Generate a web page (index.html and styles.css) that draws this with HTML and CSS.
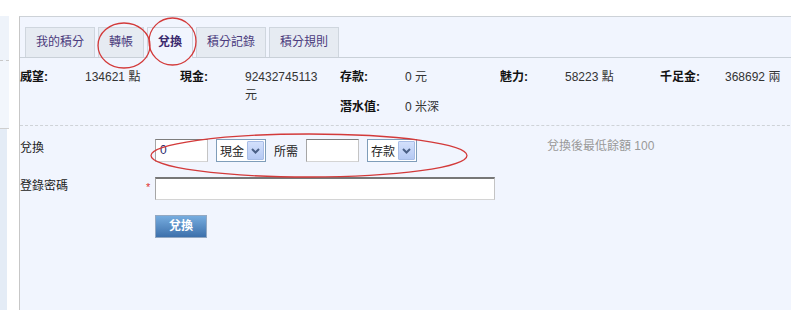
FILE: index.html
```html
<!DOCTYPE HTML>
<html lang="zh-Hant">
<head>
    <meta charset="UTF-8">
    <title>兌換積分</title>
    <link rel="stylesheet" href="styles.css">
</head>
<body>

    <div class="page">
        <!-- 左側欄 -->
        <div class="sidebar">
            <div class="side-top"></div>
            <div class="side-mid"></div>
            <div class="side-rest"></div>
        </div>

        <div class="main">
            <!-- 分頁 -->
            <ul class="tabs">
                <li>我的積分</li>
                <li>轉帳</li>
                <li class="active">兌換</li>
                <li>積分記錄</li>
                <li>積分規則</li>
            </ul>

            <!-- 積分一覽 -->
            <div class="stats">
                <div class="stat"><b>威望:</b><span>134621 點</span></div>
                <div class="stat"><b>現金:</b><span>92432745113 元</span></div>
                <div class="stat"><b>存款:</b><span>0 元</span></div>
                <div class="stat dive"><b>潛水值:</b><span>0 米深</span></div>
                <div class="stat"><b>魅力:</b><span>58223 點</span></div>
                <div class="stat"><b>千足金:</b><span>368692 兩</span></div>
            </div>

            <!-- 兌換表單 -->
            <div class="form">
                <div class="label">兌換</div>
                <div class="star"></div>
                <div class="field">
                    <div class="input small">0</div>
                    <div class="select">
                        <span>現金</span>
                        <span class="arrow"><svg width="9" height="6" viewBox="0 0 9 6"><path d="M1 1 L4.5 4.5 L8 1" fill="none" stroke="#4a5f86" stroke-width="2"/></svg></span>
                    </div>
                    <span class="text">所需</span>
                    <div class="input small"></div>
                    <div class="select">
                        <span>存款</span>
                        <span class="arrow"><svg width="9" height="6" viewBox="0 0 9 6"><path d="M1 1 L4.5 4.5 L8 1" fill="none" stroke="#4a5f86" stroke-width="2"/></svg></span>
                    </div>
                </div>
                <div class="hint">兌換後最低餘額 100</div>

                <div class="label">登錄密碼</div>
                <div class="star">*</div>
                <div class="field">
                    <div class="input long"></div>
                </div>
                <div class="hint"></div>

                <div class="label"></div>
                <div class="star"></div>
                <div class="field">
                    <div class="button">兌換</div>
                </div>
                <div class="hint"></div>
            </div>
        </div>
    </div>

    <!-- 紅色標註圈 -->
    <svg class="marks" width="791" height="310">
        <ellipse cx="124" cy="45.5" rx="26" ry="22.5" />
        <ellipse cx="172.5" cy="41.5" rx="23.5" ry="23.5" />
        <ellipse cx="309" cy="155.5" rx="158" ry="21.5" />
    </svg>

</body>
</html>
```

FILE: styles.css
```css
body {
    margin: 0;
    background: #fff;
    font-family: "Liberation Sans", "Noto Sans CJK TC", sans-serif;
    font-size: 12px;
    color: #333;
    overflow: hidden;
    width: 791px;
    height: 310px;
    position: relative;
}
.page {
    display: flex;
    height: 310px;
}
.sidebar {
    flex: none;
    width: 9px;
    margin-top: 16px;
    margin-right: 10px;
    display: flex;
    flex-direction: column;
}
.side-top {
    height: 44px;
    background: #eef3fa;
    border-bottom: 1px dashed #c9c9c9;
}
.side-mid {
    height: 67px;
    background: #f2f6fc;
    border-bottom: 1px solid #cfcfcf;
}
.side-rest {
    flex: 1;
    width: 7px;
    background: #e4ecf6;
}
.main {
    flex: none;
    width: 800px;
    margin-top: 16px;
    border-top: 1px solid #cdd2d8;
    border-left: 1px solid #c7c7c7;
    background: #f1f5fe;
}
.tabs {
    list-style: none;
    margin: 0;
    padding: 10px 0 0 5px;
    display: flex;
    gap: 3px;
    border-bottom: 1px solid #c9d0d8;
}
.tabs li {
    height: 29px;
    line-height: 29px;
    padding: 0 10px;
    border: 1px solid #cfd6de;
    border-bottom: none;
    background: #e6ebf2;
    color: #4a3a7c;
}
.tabs li.active {
    background: #f1f5fe;
    font-weight: bold;
    color: #3c2a6e;
    height: 30px;
    margin-bottom: -1px;
}
.stats {
    display: grid;
    grid-template-columns: repeat(5, 160px);
    grid-auto-rows: 30px;
    margin-top: 4px;
}
.stat {
    display: flex;
    padding: 6px 0;
    line-height: 18px;
}
.stat b {
    width: 65px;
    flex: none;
    color: #111;
}
.stat span {
    width: 80px;
}
.stat.dive {
    grid-column: 3;
    grid-row: 2;
}
.form {
    margin-top: 3px;
    border-top: 1px dashed #cfd3d8;
    padding-top: 13px;
    display: grid;
    grid-template-columns: 126px 9px 392px 200px;
    row-gap: 15px;
}
.label {
    line-height: 18px;
    color: #222;
}
.star {
    color: #e0302f;
    line-height: 20px;
    font-size: 11px;
}
.field {
    display: flex;
    align-items: center;
    gap: 8px;
}
.text {
    color: #222;
}
.hint {
    color: #999;
    line-height: 14px;
}
.input {
    box-sizing: border-box;
    height: 23px;
    background: #fff;
    border: 1px solid;
    border-color: #7d7d7d #c4c4c4 #d4d4d4 #a6a6a6;
    padding: 3px 4px;
    line-height: 15px;
    color: #2c2c6c;
}
.input.small {
    width: 53px;
}
.input.long {
    width: 340px;
    border-top: 2px solid #777;
}
.select {
    box-sizing: border-box;
    height: 23px;
    width: 50px;
    border: 1px solid #7f9db9;
    background: #fff;
    display: flex;
    align-items: center;
    justify-content: space-between;
    padding: 0 1px 0 3px;
    color: #222;
}
.arrow {
    box-sizing: border-box;
    width: 17px;
    height: 19px;
    border: 1px solid #a8bde6;
    border-radius: 1px;
    background: linear-gradient(#d3e0fc, #b5c9f3);
    display: flex;
    align-items: center;
    justify-content: center;
}
.button {
    box-sizing: border-box;
    width: 52px;
    height: 23px;
    line-height: 21px;
    text-align: center;
    border: 1px solid #93a8c2;
    background: linear-gradient(#76acdf, #3d70ab);
    color: white;
    font-weight: bold;
    cursor: pointer;
}
.marks {
    position: absolute;
    left: 0;
    top: 0;
    pointer-events: none;
}
.marks ellipse {
    fill: none;
    stroke: #d33a3a;
    stroke-width: 1.3;
}
```
